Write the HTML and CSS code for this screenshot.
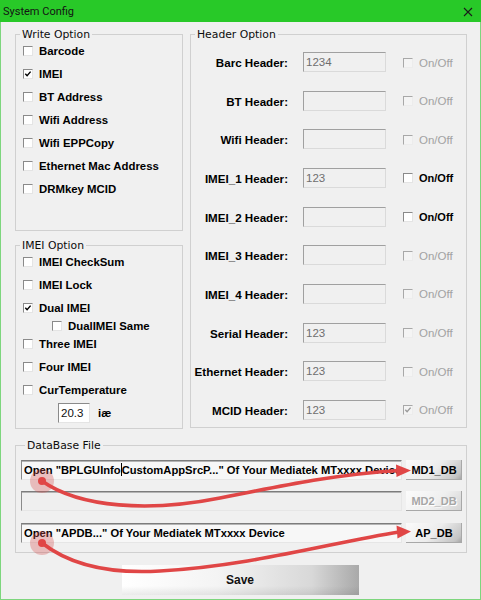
FILE: index.html
```html
<!DOCTYPE html>
<html lang="en">
<head>
<meta charset="utf-8">
<title>System Config</title>
<link rel="stylesheet" href="styles.css">
</head>
<body>
<div class="window">
  <div class="titlebar">
    <span class="title">System Config</span>
    <svg class="close" width="10" height="10" viewBox="0 0 10 10" aria-label="Close">
      <path d="M1 1 L9 9 M9 1 L1 9" stroke="#1b1b1b" stroke-width="1.1" fill="none"/>
    </svg>
  </div>

  <div class="client">
    <div class="columns">
      <div class="left-col">
        <fieldset class="group write-group">
          <legend>Write Option</legend>
          <ul class="checklist">
            <li class="check-row"><span class="cb"></span>Barcode</li>
            <li class="check-row"><span class="cb checked"><svg viewBox="0 0 8 8"><path d="M1.3 3.8 L3.1 5.8 L6.6 1.6"/></svg></span>IMEI</li>
            <li class="check-row"><span class="cb"></span>BT Address</li>
            <li class="check-row"><span class="cb"></span>Wifi Address</li>
            <li class="check-row"><span class="cb"></span>Wifi EPPCopy</li>
            <li class="check-row"><span class="cb"></span>Ethernet Mac Address</li>
            <li class="check-row"><span class="cb"></span>DRMkey MCID</li>
          </ul>
        </fieldset>

        <fieldset class="group imei-group">
          <legend>IMEI Option</legend>
          <ul class="checklist">
            <li class="check-row"><span class="cb"></span>IMEI CheckSum</li>
            <li class="check-row"><span class="cb"></span>IMEI Lock</li>
            <li class="check-row"><span class="cb checked"><svg viewBox="0 0 8 8"><path d="M1.3 3.8 L3.1 5.8 L6.6 1.6"/></svg></span>Dual IMEI</li>
            <li class="check-row sub-row"><span class="cb"></span>DualIMEI Same</li>
            <li class="check-row"><span class="cb"></span>Three IMEI</li>
            <li class="check-row"><span class="cb"></span>Four IMEI</li>
            <li class="check-row"><span class="cb"></span>CurTemperature</li>
          </ul>
          <div class="temp-row">
            <span class="field temp-field">20.3</span>
            <span class="unit">iæ</span>
          </div>
        </fieldset>
      </div>

      <fieldset class="group header-group">
        <legend>Header Option</legend>
        <div class="header-rows">
          <div class="header-row"><span class="hlabel">Barc Header:</span><span class="field hfield">1234</span><span class="cb disabled"></span><span class="onoff">On/Off</span></div>
          <div class="header-row"><span class="hlabel">BT Header:</span><span class="field hfield"></span><span class="cb disabled"></span><span class="onoff">On/Off</span></div>
          <div class="header-row"><span class="hlabel">Wifi Header:</span><span class="field hfield"></span><span class="cb disabled"></span><span class="onoff">On/Off</span></div>
          <div class="header-row"><span class="hlabel">IMEI_1 Header:</span><span class="field hfield">123</span><span class="cb"></span><span class="onoff active">On/Off</span></div>
          <div class="header-row"><span class="hlabel">IMEI_2 Header:</span><span class="field hfield"></span><span class="cb"></span><span class="onoff active">On/Off</span></div>
          <div class="header-row"><span class="hlabel">IMEI_3 Header:</span><span class="field hfield"></span><span class="cb disabled"></span><span class="onoff">On/Off</span></div>
          <div class="header-row"><span class="hlabel">IMEI_4 Header:</span><span class="field hfield"></span><span class="cb disabled"></span><span class="onoff">On/Off</span></div>
          <div class="header-row"><span class="hlabel">Serial Header:</span><span class="field hfield">123</span><span class="cb disabled"></span><span class="onoff">On/Off</span></div>
          <div class="header-row"><span class="hlabel">Ethernet Header:</span><span class="field hfield">123</span><span class="cb disabled"></span><span class="onoff">On/Off</span></div>
          <div class="header-row"><span class="hlabel">MCID Header:</span><span class="field hfield">123</span><span class="cb disabled checked"><svg viewBox="0 0 8 8"><path d="M1.3 3.8 L3.1 5.8 L6.6 1.6"/></svg></span><span class="onoff">On/Off</span></div>
        </div>
      </fieldset>
    </div>

    <fieldset class="group db-group">
      <legend>DataBase File</legend>
      <div class="db-rows">
        <div class="db-row">
          <span class="field dbfield">Open "BPLGUInfo<span class="caret"></span>CustomAppSrcP..." Of Your Mediatek MTxxxx Device</span>
          <button class="btn">MD1_DB</button>
        </div>
        <div class="db-row">
          <span class="field dbfield empty"></span>
          <button class="btn" disabled>MD2_DB</button>
        </div>
        <div class="db-row">
          <span class="field dbfield">Open "APDB..." Of Your Mediatek MTxxxx Device</span>
          <button class="btn">AP_DB</button>
        </div>
      </div>
    </fieldset>

    <div class="actions">
      <button class="save-btn">Save</button>
    </div>
  </div>

  <!-- red callouts pointing from the "Open" hints to their buttons -->
  <svg class="callouts" width="481" height="600" viewBox="0 0 481 600">
    <circle cx="42" cy="481" r="12" fill="rgba(214,80,80,0.33)"/>
    <circle cx="42" cy="543" r="12" fill="rgba(214,80,80,0.33)"/>
    <path d="M42,481 C80,508 150,512 220,498 C290,484 340,474 399,470.5" class="curve"/>
    <path d="M42,543 C70,565 110,574 160,571 C250,566 330,543 399,532" class="curve"/>
    <polygon points="396,464.5 411,470.6 396.5,477" fill="#e04646"/>
    <polygon points="396.5,525.5 411,531.6 397.5,538.5" fill="#e04646"/>
    <circle cx="42" cy="481" r="4" fill="#e04646"/>
    <circle cx="42" cy="543" r="4" fill="#e04646"/>
  </svg>
</div>
</body>
</html>
```

FILE: styles.css
```css
* {
  box-sizing: border-box;
}

html,
body {
  margin: 0;
  padding: 0;
  background: #ffffff;
}

body {
  font-family: "Liberation Sans", Arial, sans-serif;
  color: #000;
}

.window {
  position: relative;
  width: 481px;
  height: 600px;
  display: flex;
  flex-direction: column;
  background: #f0f0f0;
}

/* title bar */
.titlebar {
  height: 22px;
  flex: none;
  background: #28c928;
  display: flex;
  align-items: center;
  justify-content: space-between;
  padding: 0 8px 0 3px;
}

.title {
  font-family: Roboto, "Liberation Sans", sans-serif;
  font-size: 11px;
  color: #141414;
  padding-top: 1px;
}

.close {
  display: block;
  margin-top: 1px;
}

/* client area */
.client {
  flex: 1;
  border: 1px solid #7dd67d;
  border-top: 0;
  padding: 6.5px 13px 0 14px;
}

.columns {
  display: grid;
  grid-template-columns: 168px 277px;
  column-gap: 7px;
  align-items: start;
}

.left-col {
  display: flex;
  flex-direction: column;
  gap: 9.5px;
}

/* group boxes */
.group {
  margin: 0;
  padding: 0;
  border: 1px solid #d0d0d0;
  min-width: 0;
}

.group legend {
  font-family: "DejaVu Sans", Tahoma, sans-serif;
  font-size: 10.8px;
  line-height: 11px;
  padding: 0 2px;
  margin-left: 4px;
  color: #0c0c0c;
}

.write-group {
  height: 202px;
}

.imei-group {
  height: 189px;
}

.header-group {
  height: 399px;
  padding: 12.5px 0 0 0;
}

/* checkbox lists */
.checklist {
  list-style: none;
  margin: 0;
  padding: 0 0 0 7px;
}

.check-row {
  height: 23px;
  display: flex;
  align-items: center;
  gap: 6px;
  font-weight: bold;
  font-size: 11.4px;
}

.imei-group .checklist {
  margin-top: -1px;
}

.check-row.sub-row {
  height: 13px;
  padding-left: 29px;
}

.cb {
  flex: none;
  width: 10px;
  height: 10px;
  background: #fff;
  border: 1px solid;
  border-color: #8a8a8a #e4e4e4 #e4e4e4 #8a8a8a;
  display: grid;
  place-items: center;
}

.cb svg {
  width: 8px;
  height: 8px;
  display: block;
}

.cb svg path {
  fill: none;
  stroke: #000;
  stroke-width: 1.4;
}

.cb.disabled {
  background: #f4f4f4;
  border-color: #a8a8a8 #ececec #ececec #a8a8a8;
}

.cb.disabled svg path {
  stroke: #9a9a9a;
}

/* generic sunken edit field */
.field {
  display: block;
  background: #f0f0f0;
  border: 1px solid;
  border-color: #a0a0a0 #dadada #dadada #a0a0a0;
  white-space: nowrap;
  overflow: hidden;
}

.temp-row {
  display: flex;
  align-items: center;
  margin-top: 2px;
  padding-left: 42px;
}

.temp-field {
  width: 32px;
  height: 20px;
  background: #fff;
  border-color: #8a8a8a #e4e4e4 #e4e4e4 #8a8a8a;
  font-size: 11.5px;
  line-height: 18px;
  padding-left: 2px;
  color: #111;
}

.unit {
  margin-left: 8px;
  font-weight: bold;
  font-size: 11.3px;
}

/* header option rows */
.header-rows {
  display: flex;
  flex-direction: column;
  gap: 18.67px;
}

.header-row {
  height: 20px;
  display: flex;
  align-items: center;
}

.hlabel {
  width: 97px;
  text-align: right;
  font-weight: bold;
  font-size: 11.6px;
  white-space: nowrap;
  padding-top: 1px;
}

.hfield {
  width: 83px;
  height: 20px;
  margin-left: 15px;
  font-size: 11.5px;
  line-height: 18px;
  padding-left: 2px;
  color: #6e6e6e;
}

.header-row .cb {
  margin-left: 17px;
  margin-top: 1px;
}

.onoff {
  margin-left: 6px;
  font-size: 11.5px;
  color: #a2a2a2;
  padding-top: 1px;
}

.onoff.active {
  color: #000;
  font-weight: bold;
  font-size: 11px;
}

/* database file */
.db-group {
  margin-top: 10.5px;
  padding: 9px 4px 9.5px 5px;
}

.db-rows {
  display: flex;
  flex-direction: column;
  gap: 11.5px;
}

.db-row {
  display: flex;
  align-items: center;
  height: 20px;
}

.dbfield {
  width: 381px;
  height: 20px;
  background: #f7f7f7;
  border-color: #7c7c7c #e6e6e6 #e6e6e6 #8a8a8a;
  box-shadow: inset 0 1px 0 #b4b4b4;
  font-weight: bold;
  font-size: 11.2px;
  line-height: 18px;
  padding-left: 2px;
}

.dbfield.empty {
  background: #efefef;
}

.caret {
  display: inline-block;
  width: 1px;
  height: 13px;
  background: #000;
  vertical-align: -2px;
}

.btn {
  margin-left: 4px;
  width: 56px;
  height: 20px;
  padding: 0;
  border: 0;
  font-family: inherit;
  font-weight: bold;
  font-size: 11px;
  color: #000;
  background: linear-gradient(135deg, #fbfbfb 0%, #ececec 50%, #c4c4c4 88%, #9d9d9d 100%);
  box-shadow: inset -1px -1px 0 #a8a8a8;
}

.btn:disabled {
  color: #a6a6a6;
  text-shadow: 1px 1px 0 #ffffff;
  background: linear-gradient(135deg, #fbfbfb 0%, #efefef 55%, #d2d2d2 100%);
}

/* save */
.actions {
  display: flex;
  justify-content: center;
  padding-right: 2px;
  margin-top: 11.5px;
}

.save-btn {
  width: 237px;
  height: 30px;
  padding: 0;
  border: 0;
  font-family: inherit;
  font-weight: bold;
  font-size: 12px;
  color: #111;
  background:
    linear-gradient(to bottom, rgba(255, 255, 255, 0) 70%, rgba(0, 0, 0, 0.08) 100%),
    linear-gradient(to right, #ffffff 0%, #f4f4f4 40%, #d8d8d8 80%, #a9a9a9 100%);
}

/* annotation overlay */
.callouts {
  position: absolute;
  top: 0;
  left: 0;
  pointer-events: none;
}

.callouts .curve {
  fill: none;
  stroke: #e04646;
  stroke-width: 3.6;
  stroke-linecap: round;
}
```
